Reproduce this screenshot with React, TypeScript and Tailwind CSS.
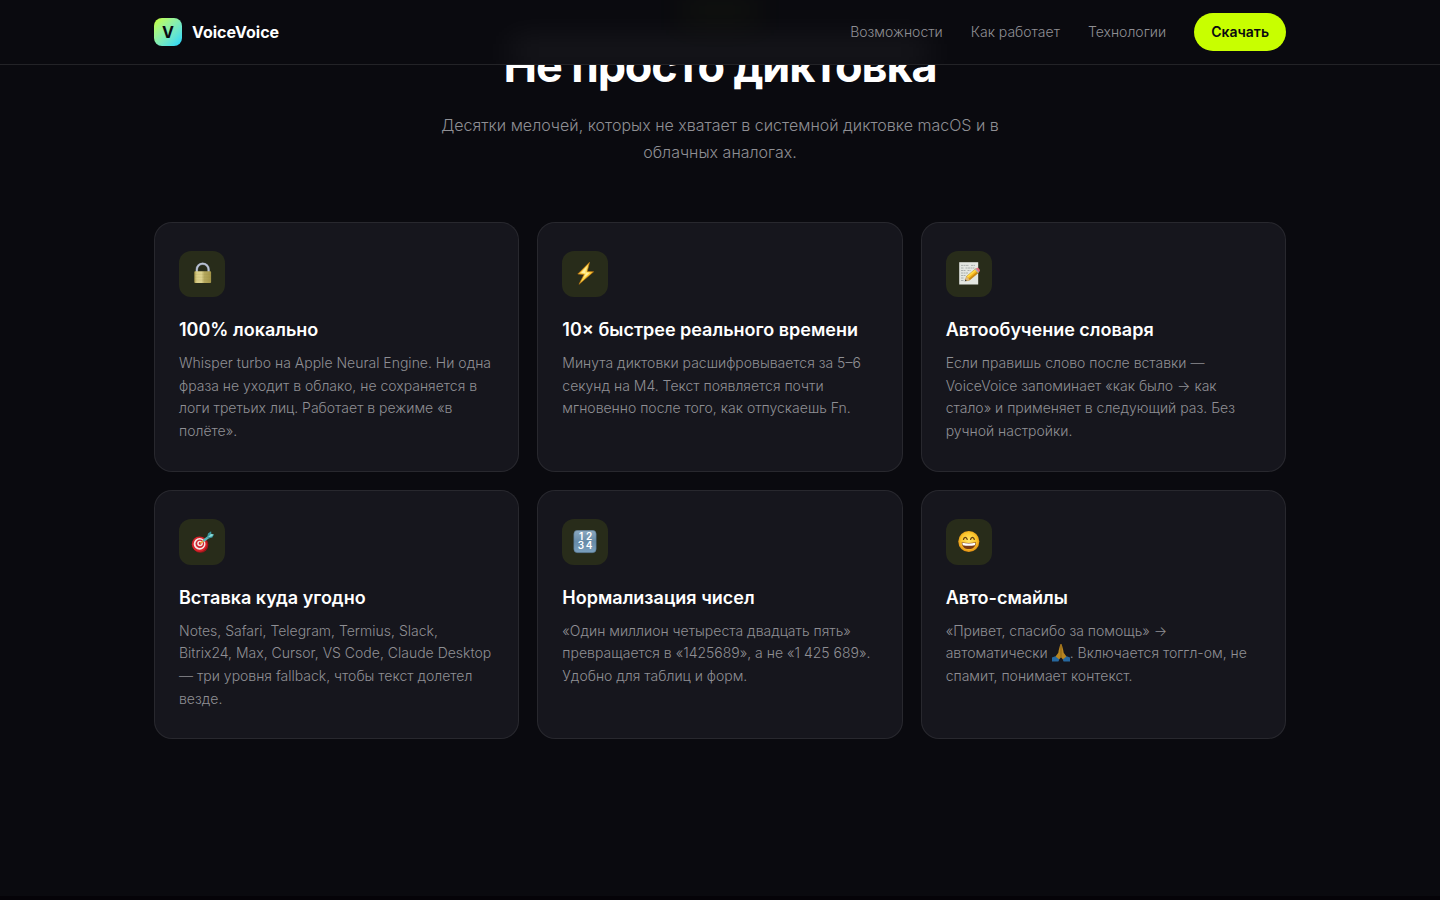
import type { ReactNode } from "react";

function LockIcon() {
  return (
    <svg viewBox="0 0 24 24" className="size-6" aria-hidden="true">
      <defs>
        <linearGradient id="lockBody" x1="0" x2="1" y1="0" y2="0">
          <stop offset="0" stopColor="#a89a4e" />
          <stop offset=".15" stopColor="#d9cd86" />
          <stop offset=".42" stopColor="#ddd28f" />
          <stop offset=".6" stopColor="#b5a85e" />
          <stop offset="1" stopColor="#a39548" />
        </linearGradient>
      </defs>
      <path d="M6.800 11V7.600a5.900 5.900 0 0 1 11.800 0V11" fill="none" stroke="#6f7680" strokeWidth="2.5" />
      <path d="M6.800 11V7.600a5.900 5.900 0 0 1 11.800 0V11" fill="none" stroke="#b9c2d4" strokeWidth="1.7" />
      <rect x="4.300" y="9.300" width="16.800" height="11.700" rx=".8" fill="url(#lockBody)" />
      <path d="M4.600 12.400h16.200M4.600 15.200h16.200M4.600 18h16.200" stroke="#8d803b" strokeWidth=".3" opacity=".4" />
    </svg>
  );
}

function BoltIcon() {
  return (
    <svg viewBox="0 0 24 24" className="size-6" aria-hidden="true">
      <defs>
        <linearGradient id="bolt" x1="0" x2="1" y1="0" y2="1">
          <stop offset="0" stopColor="#f08a12" />
          <stop offset=".45" stopColor="#ffe15a" />
          <stop offset=".6" stopColor="#ffd23c" />
          <stop offset="1" stopColor="#e07a08" />
        </linearGradient>
      </defs>
      <path d="M16.500.3 4.800 12l6.300.4L6 22.300 20.600 9.800l-6.400-.4z" fill="url(#bolt)" stroke="#b9730e" strokeWidth=".7" strokeLinejoin="round" />
      <path d="M14.200 4 8 11l5 .3-2.500 5 6.300-5.500-4.900-.3z" fill="#fff0a0" />
    </svg>
  );
}

function MemoIcon() {
  return (
    <svg viewBox="0 0 24 24" className="size-6" aria-hidden="true">
      <path d="M2.200.2h19v22.300h-19z" fill="#e3e6e1" />
      <path d="M4 3.400h8M14 3.400h4M4 6h3M8.500 6h9M4 8.500h5M10.500 8.500h3M4 11h7M4 13.500h5M4 16h3M4 18.500h3" stroke="#9da2a1" strokeWidth=".8" strokeDasharray="2 .5" />
      <path d="m8.300 17.800 1.400-3.600 9-7.500 3 3.700-9.100 7.700-3.800.8z" fill="#f5b81f" stroke="#8f6a1a" strokeWidth=".4" />
      <path d="m9.900 14.200 9-7.500 1 1.200-9 7.500z" fill="#ffda4a" />
      <path d="m11.700 16.700 9-7.500 1 1.200-9.100 7.700z" fill="#c98713" />
      <path d="m17.900 7.400 1.500-1.200 3 3.600-1.500 1.300z" fill="#a9aeb3" />
      <path d="m18.900 6.600.9-.7c1.400-.8 4 2.200 2.900 3.300l-.9.900z" fill="#e56f80" />
      <path d="m8.300 17.800 1.400-3.600 2.900 3.900-3.800.8z" fill="#dcb980" />
      <path d="m8.400 17.600-.7 2 2.100-1z" fill="#343434" />
    </svg>
  );
}

function TargetIcon() {
  return (
    <svg viewBox="0 0 24 24" className="size-6" aria-hidden="true">
      <ellipse cx="10.400" cy="14.800" rx="7.900" ry="7.900" fill="#9e161b" />
      <circle cx="9.400" cy="14.200" r="7.600" fill="#d8232b" />
      <circle cx="9.600" cy="13.900" r="5.900" fill="#f7e8e6" />
      <circle cx="9.800" cy="13.700" r="4.300" fill="#cf2730" />
      <circle cx="10" cy="13.500" r="2.800" fill="#f7e8e6" />
      <circle cx="10.100" cy="13.400" r="1.300" fill="#cf2730" />
      <path d="m10.200 13.300 4-3" stroke="#e8a33a" strokeWidth="1.500" />
      <path d="m13.300 11 6.300-4.700" stroke="#59b4b8" strokeWidth="2.500" />
      <path d="m17.200 7 .8-3.500 3.100-2.200.3 2.700 2.600.6-1.700 2.900-3.800.9z" fill="#3a979e" />
      <path d="m17.900 7.200 3-3.100 2.700.5-2 2z" fill="#8bdcd9" />
    </svg>
  );
}

function NumbersIcon() {
  return (
    <svg viewBox="0 0 24 24" className="size-6" aria-hidden="true">
      <defs>
        <linearGradient id="numbers" x1="0" x2="0" y1="0" y2="1">
          <stop offset="0" stopColor="#8ca9c0" />
          <stop offset=".5" stopColor="#668ba8" />
          <stop offset="1" stopColor="#7ba0bd" />
        </linearGradient>
      </defs>
      <rect x=".8" y=".3" width="22.400" height="22.400" rx="3.800" fill="url(#numbers)" stroke="#4e6d86" strokeWidth=".5" />
      <g fill="#fff" fontFamily="Inter, sans-serif" fontSize="10" fontWeight="600" textAnchor="middle">
        <text x="8" y="10.200">1</text>
        <text x="16" y="10.200">2</text>
        <text x="8" y="19.400">3</text>
        <text x="16" y="19.400">4</text>
      </g>
    </svg>
  );
}

function SmileIcon() {
  return (
    <svg viewBox="0 0 24 24" className="size-6" aria-hidden="true">
      <defs>
        <radialGradient id="smile" cx=".5" cy=".45" r=".55">
          <stop offset="0" stopColor="#ffe66a" />
          <stop offset=".65" stopColor="#fbc62c" />
          <stop offset="1" stopColor="#e28d12" />
        </radialGradient>
      </defs>
      <circle cx="11.800" cy="11.500" r="10.500" fill="url(#smile)" />
      <path d="M6.500 9.400c.5-2.800 3-2.800 3.700 0M13.600 9.400c.6-2.800 3.100-2.800 3.700 0" fill="none" stroke="#633c12" strokeWidth="1.300" strokeLinecap="round" />
      <path d="M4.700 12.200c4.400 1 9.900 1 14.300 0-.1 4.400-3 6.900-7.200 6.900s-7-2.500-7.100-6.900z" fill="#7a3b13" />
      <path d="M5.300 12.800c4.200.9 8.900.9 13.100 0 0 1-.2 1.800-.6 2.400-3.600.7-8.300.7-11.900 0-.4-.6-.6-1.400-.6-2.400z" fill="#fff" />
    </svg>
  );
}

function PrayIcon() {
  return (
    <svg viewBox="0 0 18 18" className="inline-block size-[18px] align-[-4px]" role="img" aria-label="спасибо">
      <path d="M8.300.5c-.7 2-1.500 5-2 8.200L3.200 13l3 3.500L9 13.200l2.800 3.300 3-3.500-3.100-4.300c-.5-3.200-1.300-6.200-2-8.200-.3-.7-1.100-.7-1.400 0z" fill="#b78420" />
      <path d="M9 1v12.200" stroke="#7d5712" strokeWidth=".7" />
      <path d="m3.300 12.300 4 3.200-.9 2.100H0v-4.200z" fill="#2668a0" />
      <path d="m14.700 12.300-4 3.200.9 2.100H18v-4.200z" fill="#2668a0" />
    </svg>
  );
}

interface Feature {
  title: string;
  icon: ReactNode;
  text: ReactNode;
}

const features: Feature[] = [
  {
    title: "100% локально",
    icon: <LockIcon />,
    text: (
      <>
        Whisper turbo на Apple Neural Engine. Ни одна
        <br />
        фраза не уходит в облако, не сохраняется в
        <br />
        логи третьих лиц. Работает в режиме «в
        <br />
        полёте».
      </>
    ),
  },
  {
    title: "10× быстрее реального времени",
    icon: <BoltIcon />,
    text: (
      <>
        Минута диктовки расшифровывается за 5–6
        <br />
        секунд на M4. Текст появляется почти
        <br />
        мгновенно после того, как отпускаешь Fn.
      </>
    ),
  },
  {
    title: "Автообучение словаря",
    icon: <MemoIcon />,
    text: (
      <>
        Если правишь слово после вставки —
        <br />
        VoiceVoice запоминает «как было → как
        <br />
        стало» и применяет в следующий раз. Без
        <br />
        ручной настройки.
      </>
    ),
  },
  {
    title: "Вставка куда угодно",
    icon: <TargetIcon />,
    text: (
      <>
        Notes, Safari, Telegram, Termius, Slack,
        <br />
        Bitrix24, Max, Cursor, VS Code, Claude Desktop
        <br />
        — три уровня fallback, чтобы текст долетел
        <br />
        везде.
      </>
    ),
  },
  {
    title: "Нормализация чисел",
    icon: <NumbersIcon />,
    text: (
      <>
        «Один миллион четыреста двадцать пять»
        <br />
        превращается в «1425689», а не «1 425 689».
        <br />
        Удобно для таблиц и форм.
      </>
    ),
  },
  {
    title: "Авто-смайлы",
    icon: <SmileIcon />,
    text: (
      <>
        «Привет, спасибо за помощь» →
        <br />
        автоматически <PrayIcon />. Включается тоггл-ом, не
        <br />
        спамит, понимает контекст.
      </>
    ),
  },
];

function Header() {
  return (
    <header className="fixed inset-x-0 top-0 z-10 overflow-hidden border-b border-white/10 bg-[#0a0a0f]">
      <div className="absolute bottom-0 left-1/2 h-6 w-[420px] -translate-x-1/2 bg-white/7 blur-lg" aria-hidden="true" />
      <div className="absolute top-0 left-1/2 h-5 w-20 -translate-x-1/2 bg-[#c8ff00]/5 blur-lg" aria-hidden="true" />
      <div className="relative mx-auto flex h-16 max-w-[1180px] items-center justify-between px-6">
        <a href="#top" className="flex items-center gap-2.5 text-base font-bold text-white">
          <span className="flex size-7 items-center justify-center rounded-lg bg-linear-135 from-[#c8ff00] to-[#00d4ff] text-[#0a0a0f]">
            V
          </span>
          VoiceVoice
        </a>
        <nav className="flex items-center gap-7 text-sm font-light text-[#8f8f94]">
          <a href="#features">Возможности</a>
          <a href="#how">Как работает</a>
          <a href="#tech">Технологии</a>
          <a href="#download" className="rounded-full bg-[#c8ff00] px-[17px] py-[9px] font-semibold text-[#0a0a0f]">
            Скачать
          </a>
        </nav>
      </div>
    </header>
  );
}

function FeatureCard({ title, icon, text }: Feature) {
  return (
    <article className="rounded-[18px] border border-white/8 bg-[#16161d] px-6 py-7">
      <div className="mb-[19px] flex size-[46px] items-center justify-center rounded-xl bg-[#282c1a]">{icon}</div>
      <h3 className="mb-2 text-lg leading-7 font-semibold text-white">{title}</h3>
      <p className="text-sm leading-[1.62] font-light text-[#8f8f94]">{text}</p>
    </article>
  );
}

export default function App() {
  return (
    <div id="top" className="min-h-screen overflow-hidden bg-[#0a0a0f] font-['Inter','Noto_Sans',sans-serif]">
      <Header />
      <main>
        <section id="features" className="mx-auto max-w-[1180px] px-6 pt-9 pb-[157px]">
          <div className="mx-auto mb-14 flex max-w-[640px] flex-col items-center text-center">
            <h2 className="mb-4 text-[45px] leading-[60px] font-bold tracking-tight text-white">Не просто диктовка</h2>
            <p className="text-base leading-[27px] font-light text-[#8f8f94]">
              Десятки мелочей, которых не хватает в системной диктовке macOS и в
              <br />
              облачных аналогах.
            </p>
          </div>
          <div className="grid grid-cols-3 gap-[18px]">
            {features.map((feature) => (
              <FeatureCard key={feature.title} {...feature} />
            ))}
          </div>
        </section>
      </main>
      <footer className="h-1 bg-[#050308]" />
    </div>
  );
}
